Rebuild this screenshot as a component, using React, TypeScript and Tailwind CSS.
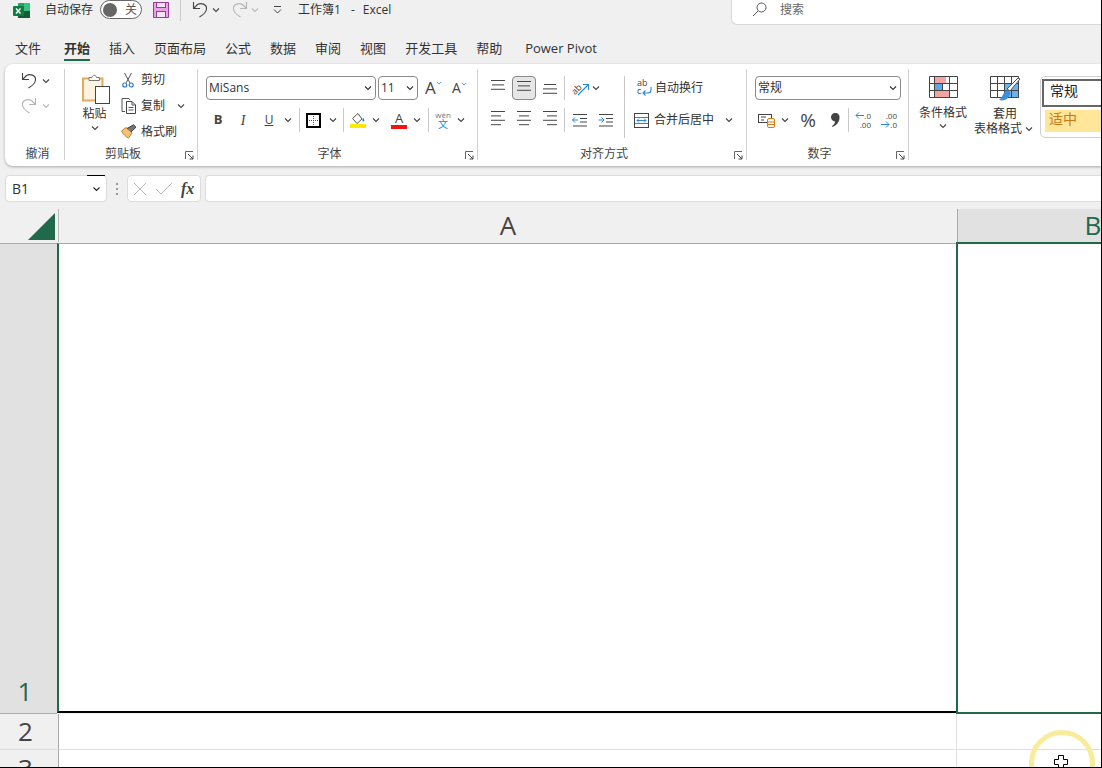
import type { ReactNode } from "react";

// small caret used all over the ribbon
function Caret({ className = "", color = "#444" }: { className?: string; color?: string }) {
  return (
    <svg width="8" height="6" viewBox="0 0 8 6" fill="none" className={className}>
      <path d="M1 1.5 L4 4.5 L7 1.5" stroke={color} strokeWidth="1.1" />
    </svg>
  );
}

function Launcher() {
  return (
    <svg width="9" height="9" viewBox="0 0 9 9" fill="none" className="absolute right-[3px] bottom-0">
      <path d="M0.5 8 V0.5 H8" stroke="#666" />
      <path d="M3 3 L8 8 M8 4.5 V8 H4.5" stroke="#444" />
    </svg>
  );
}

function Group({ label, width, children }: { label: string; width: string; children: ReactNode }) {
  const first = label === "撤消";
  return (
    <div className={"relative flex h-[91px] shrink-0 flex-col border-r border-[#d0d0d0] " + width}>
      <div className="min-h-0 flex-1">{children}</div>
      <div className={"h-[16px] text-center text-[12px] leading-[19px] text-[#444] " + (first ? "pl-[6px]" : "pr-[16px]")}>{label}</div>
      {!first && <Launcher />}
    </div>
  );
}

function Sep({ className = "h-[24px]" }: { className?: string }) {
  return <div className={"w-px shrink-0 bg-[#c8c8c8] " + className} />;
}

function Combo({ text, width }: { text: string; width: string }) {
  return (
    <div className={"flex h-[24px] shrink-0 items-center justify-between rounded-[4px] border border-[#8a8a8a] bg-white pl-[2px] pr-[3px] text-[12px] text-[#333] " + width}>
      <span>{text}</span>
      <Caret color="#333" />
    </div>
  );
}

function Lines({ rows }: { rows: [number, number][] }) {
  return (
    <svg width="16" height={rows.length * 4.4} viewBox={`0 0 16 ${rows.length * 4.4}`} fill="none">
      {rows.map(([x, w], i) => (
        <path key={i} d={`M${x} ${0.5 + i * 4.4} H${x + w}`} stroke="#444" />
      ))}
    </svg>
  );
}

function ExcelLogo() {
  return (
    <svg width="17" height="17" viewBox="0 0 17 17">
      <rect x="5" y="1" width="12" height="15" rx="1" fill="#21a366" />
      <rect x="11" y="1" width="6" height="8" fill="#33c481" />
      <rect x="5" y="9" width="12" height="7" fill="#185c37" />
      <rect x="0" y="4" width="11" height="10" rx="1" fill="#107c41" />
      <path d="M3 6.5 L7.5 11.5 M7.5 6.5 L3 11.5" stroke="#fff" strokeWidth="1.4" />
    </svg>
  );
}

function SaveIcon() {
  return (
    <svg width="16" height="16" viewBox="0 0 16 16" fill="none">
      <path d="M0.5 0.5 H15.5 V15.5 H0.5 Z" fill="#e7a3e6" stroke="#9b3a9b" />
      <rect x="3.5" y="0.5" width="9" height="5" fill="#f7e4f7" stroke="#9b3a9b" />
      <rect x="3.5" y="9.5" width="9" height="6" fill="#f7e4f7" stroke="#9b3a9b" />
    </svg>
  );
}

function Undo({ color = "#444", flip = false }: { color?: string; flip?: boolean }) {
  return (
    <svg width="16" height="17" viewBox="0 0 16 17" fill="none" className={flip ? "-scale-x-100" : ""}>
      <path d="M1.5 1 V7.5 H8" stroke={color} strokeWidth="1.1" />
      <path d="M1.5 7.5 L5.5 3.5 C9 1.5 15 3 14.5 8 C14.2 11 11 14 7.5 16" stroke={color} strokeWidth="1.1" />
    </svg>
  );
}

function PasteIcon() {
  return (
    <svg width="29" height="31" viewBox="0 0 29 31" fill="none" className="ml-[3px] shrink-0">
      <path d="M4 4.5 H20.5 V26.5 H1 V4.5 Z" fill="#fdf3e0" stroke="#e3ab5f" strokeWidth="2" />
      <path d="M7 5.5 V3.5 H10 C10.5 0.5 14 0.5 14.5 3.5 H17.5 V6.5 H7 Z" fill="#fff" stroke="#777" />
      <rect x="13.5" y="12.5" width="14" height="17" fill="#fff" stroke="#444" />
    </svg>
  );
}

function Scissors() {
  return (
    <svg width="12" height="16" viewBox="0 0 12 16" fill="none" className="ml-[1px]">
      <path d="M2.5 1 L8 11 M9.5 1 L4 11" stroke="#555" />
      <circle cx="2.8" cy="13" r="2" stroke="#2b7cd3" strokeWidth="1.2" />
      <circle cx="9.2" cy="13" r="2" stroke="#2b7cd3" strokeWidth="1.2" />
    </svg>
  );
}

function CopyIcon() {
  return (
    <svg width="16" height="16" viewBox="0 0 16 16" fill="none">
      <path d="M4 13.5 H1 V0.5 H8 L9 2" stroke="#555" />
      <path d="M5.5 3.5 H11 L14.5 7 V15.5 H5.5 Z" fill="#fff" stroke="#444" />
      <path d="M11 3.5 V7 H14.5 M7.5 9.5 H12.5 M7.5 12 H12.5" stroke="#555" />
    </svg>
  );
}

function BrushIcon() {
  return (
    <svg width="16" height="15" viewBox="0 0 16 15" fill="none">
      <path d="M0.5 7 L5 3.5 L11 9 L7.5 14 C5 13 2 10 0.5 7 Z" fill="#f3c27a" stroke="#c77f22" />
      <path d="M6 4.5 L12.5 0.8 L15 3.2 L10 8" fill="#777" stroke="#444" />
    </svg>
  );
}

function BorderIcon() {
  return (
    <svg width="15" height="15" viewBox="0 0 15 15" fill="none">
      <rect x="1" y="1" width="13" height="13" fill="#fff" stroke="#000" strokeWidth="2" />
      <path d="M7.5 3 V12 M3 7.5 H12" stroke="#555" strokeDasharray="1 1" />
    </svg>
  );
}

function FillIcon() {
  return (
    <svg width="16" height="16" viewBox="0 0 16 16" fill="none">
      <path d="M2.5 6.5 L8 1.5 L12 7 L7 11.5 Z" fill="#fff" stroke="#555" />
      <path d="M13 5.5 C14.5 7.5 15 9 13.6 9.6 C12.4 9.8 12 8.5 13 5.5 Z" fill="#2b7cd3" />
      <rect x="0" y="12" width="16" height="4" fill="#ffeb00" />
    </svg>
  );
}

function OrientIcon() {
  return (
    <svg width="18" height="17" viewBox="0 0 18 17" fill="none" className="overflow-visible">
      <text x="-1" y="12" fontSize="9" fill="#444" transform="rotate(-45 5 9)">ab</text>
      <path d="M6 15 L16 5 M11 4.5 H16.5 V10" stroke="#2b88d8" strokeWidth="1.1" />
    </svg>
  );
}

function IndentIcon({ right = false }: { right?: boolean }) {
  return (
    <svg width="15" height="14" viewBox="0 0 15 14" fill="none">
      <path d="M1 1.5 H15 M8 5.5 H15 M8 9 H15 M1 13 H15" stroke="#444" />
      {right ? (
        <path d="M0.5 7 H6 M3.5 4.5 L6 7 L3.5 9.5" stroke="#2b88d8" />
      ) : (
        <path d="M6 7 H0.5 M3 4.5 L0.5 7 L3 9.5" stroke="#2b88d8" />
      )}
    </svg>
  );
}

function WrapIcon() {
  return (
    <svg width="16" height="18" viewBox="0 0 16 18" fill="none" className="overflow-visible">
      <text x="0" y="7" fontSize="9" fill="#444">ab</text>
      <text x="0" y="15" fontSize="9" fill="#444">c</text>
      <path d="M14 8 V11 C14 13 12.5 14 11 14 H6 M8.5 11.5 L6 14 L8.5 16.5" stroke="#2b88d8" strokeWidth="1.1" />
    </svg>
  );
}

function MergeIcon() {
  return (
    <svg width="15" height="15" viewBox="0 0 15 15" fill="none">
      <rect x="0.5" y="0.5" width="14" height="14" stroke="#444" />
      <rect x="1" y="4" width="13" height="7" fill="#fff" />
      <path d="M1 4.5 H14 M1 10.5 H14" stroke="#2b88d8" />
      <path d="M3 7.5 H12 M5 5.5 L3 7.5 L5 9.5 M10 5.5 L12 7.5 L10 9.5" stroke="#2b88d8" />
    </svg>
  );
}

function AccountingIcon() {
  return (
    <svg width="19" height="15" viewBox="0 0 19 15" fill="none">
      <rect x="0.5" y="1.5" width="13" height="8" stroke="#444" />
      <path d="M3 4 H8 M3 7 H6" stroke="#444" />
      <rect x="9.5" y="5.5" width="7" height="9" rx="1.5" fill="#fff" stroke="#d97a10" />
      <path d="M9.5 9 H16.5 M9.5 11.5 H16.5" stroke="#d97a10" />
    </svg>
  );
}

function CommaIcon() {
  return (
    <svg width="9" height="14" viewBox="0 0 9 14">
      <path d="M4.5 0 A4 4 0 0 1 8.5 4.5 C8.5 9 5.5 12.5 1.5 14 L1 13 C3 11.5 4 10 4 8.5 A4 4 0 0 1 4.5 0 Z" fill="#444" />
    </svg>
  );
}

function DecimalIcon({ more = false }: { more?: boolean }) {
  return (
    <div className="relative h-[18px] w-[16px] text-[8px] leading-[9px] text-[#444]">
      <span className="absolute right-0 top-0">{more ? ".00" : ".0"}</span>
      <span className="absolute right-0 top-[9px]">{more ? ".0" : ".00"}</span>
      <svg width="9" height="9" viewBox="0 0 9 9" fill="none" className={more ? "absolute left-0 top-[9px]" : "absolute left-0 top-0"}>
        {more ? (
          <path d="M0 4.5 H8 M5 1.5 L8 4.5 L5 7.5" stroke="#2b88d8" />
        ) : (
          <path d="M9 4.5 H1 M4 1.5 L1 4.5 L4 7.5" stroke="#2b88d8" />
        )}
      </svg>
    </div>
  );
}

function CondIcon() {
  return (
    <svg width="29" height="22" viewBox="0 0 29 22" fill="none">
      <rect x="5" y="1" width="12" height="6" fill="#f4a3a3" />
      <rect x="5" y="7" width="8" height="7" fill="#5ea7e6" />
      <rect x="5" y="14" width="15" height="7" fill="#f4a3a3" />
      <path d="M0.5 0.5 H28.5 V21.5 H0.5 Z M5.5 0.5 V21.5 M20.5 0.5 V21.5 M0.5 7.5 H28.5 M0.5 14.5 H28.5" stroke="#444" />
      <path d="M13.5 7.5 V14.5" stroke="#444" />
    </svg>
  );
}

function TableIcon() {
  return (
    <svg width="31" height="27" viewBox="0 0 31 27" fill="none">
      <rect x="15" y="8" width="14" height="14" fill="#6db2ec" />
      <path d="M0.5 0.5 H28.5 V21.5 H0.5 Z M7.5 0.5 V21.5 M14.5 0.5 V21.5 M21.5 0.5 V21.5 M0.5 7.5 H28.5 M0.5 14.5 H28.5" stroke="#444" />
      <path d="M30 3 L20 15 L17 13 L28 2 Z" fill="#fff" stroke="#555" />
      <path d="M17 14 C13 15 14 20 9 24 C15 26 21 21 20 16 Z" fill="#3f8fd6" />
    </svg>
  );
}

function UndoGroup() {
  return (
    <Group label="撤消" width="w-[60px]">
      <div className="flex flex-col gap-[8px] pl-[16px] pt-[3px]">
        <div className="flex items-center gap-[5px]"><Undo /><Caret /></div>
        <div className="flex items-center gap-[5px]"><Undo color="#b5b5b5" flip /><Caret color="#bbb" /></div>
      </div>
    </Group>
  );
}

function ClipboardGroup() {
  return (
    <Group label="剪贴板" width="w-[133px]">
      <div className="flex pl-[15px] pt-[5px]">
        <div className="flex w-[29px] flex-col items-center">
          <PasteIcon />
          <div className="whitespace-nowrap text-[12px] leading-[17px] text-[#333]">粘贴</div>
          <Caret className="mt-[3px]" />
        </div>
        <div className="-mt-[3px] ml-[12px] flex flex-col gap-[9px] text-[12px] leading-[17px] text-[#333]">
          <div className="flex items-center"><span className="flex w-[20px]"><Scissors /></span><span>剪切</span></div>
          <div className="flex items-center"><span className="flex w-[20px]"><CopyIcon /></span><span>复制</span><Caret className="ml-[12px]" /></div>
          <div className="flex items-center"><span className="flex w-[20px]"><BrushIcon /></span><span>格式刷</span></div>
        </div>
      </div>
    </Group>
  );
}

function FontGroup() {
  return (
    <Group label="字体" width="w-[280px]">
      <div className="flex flex-col gap-[8px] pl-[8px] pt-[7px]">
        <div className="flex items-center gap-[2px]">
          <Combo text="MiSans" width="w-[170px]" />
          <Combo text="11" width="w-[40px]" />
          <span className="ml-[5px] -mt-[1px] flex w-[26px] items-center text-[17px] leading-none text-[#444]">A<Caret className="-mt-[9px] w-[6px]" color="#2b88d8" /></span>
          <span className="flex w-[26px] items-center text-[14px] leading-none text-[#444]">A<Caret className="-mt-[9px] w-[6px]" color="#2b88d8" /></span>
        </div>
        <div className="flex h-[24px] items-center text-[#444]">
          <span className="w-[24px] text-center text-[13px] font-bold">B</span>
          <span className="w-[26px] text-center font-['Liberation_Serif',serif] text-[14px] italic">I</span>
          <span className="w-[26px] text-center text-[12px] underline">U</span>
          <Caret className="ml-[2px] mr-[7px]" />
          <Sep />
          <span className="ml-[6px] mr-[8px] flex"><BorderIcon /></span>
          <Caret className="mr-[6px]" />
          <Sep />
          <span className="ml-[6px] mr-[6px] flex"><FillIcon /></span>
          <Caret className="mr-[11px]" />
          <span className="flex w-[16px] flex-col items-center text-[13px] leading-[13px]">A<span className="h-[4px] w-[16px] bg-[#f01414]" /></span>
          <Caret className="ml-[6px] mr-[7px]" />
          <Sep />
          <span className="ml-[6px] flex w-[16px] flex-col items-center leading-none">
            <span className="text-[8px] text-[#777]">wén</span>
            <span className="text-[10px] text-[#2b88d8]">文</span>
          </span>
          <Caret className="ml-[6px]" />
        </div>
      </div>
    </Group>
  );
}

function AlignGroup() {
  return (
    <Group label="对齐方式" width="w-[269px]">
      <div className="flex pl-[12px] pt-[7px]">
        <div className="flex flex-col gap-[8px]">
          <div className="flex h-[24px] items-center">
            <span className="flex w-[16px] self-start pt-[4px]"><Lines rows={[[1, 14], [2, 12], [1, 14]]} /></span>
            <span className="ml-[6px] flex h-[24px] w-[24px] items-center justify-center rounded-[4px] border border-[#8a8a8a] bg-[#e6e6e6]"><Lines rows={[[1, 14], [2, 12], [1, 14]]} /></span>
            <span className="ml-[6px] flex w-[16px] self-end pb-[3px]"><Lines rows={[[2, 12], [1, 14], [1, 14]]} /></span>
            <span className="ml-[6px]"><Sep /></span>
            <span className="ml-[7px] flex"><OrientIcon /></span>
            <Caret className="ml-[2px]" />
          </div>
          <div className="flex h-[24px] items-center">
            <span className="flex w-[16px]"><Lines rows={[[1, 14], [1, 10], [1, 14], [1, 10]]} /></span>
            <span className="ml-[10px] flex w-[16px]"><Lines rows={[[1, 14], [3, 10], [1, 14], [3, 10]]} /></span>
            <span className="ml-[10px] flex w-[16px]"><Lines rows={[[1, 14], [5, 10], [1, 14], [5, 10]]} /></span>
            <span className="ml-[6px]"><Sep /></span>
            <span className="ml-[7px] flex"><IndentIcon /></span>
            <span className="ml-[11px] flex"><IndentIcon right /></span>
          </div>
        </div>
        <span className="ml-[11px]"><Sep className="h-[62px]" /></span>
        <div className="ml-[9px] flex flex-col gap-[8px] text-[12px] text-[#333]">
          <div className="flex h-[24px] items-center"><span className="ml-[3px] flex w-[18px]"><WrapIcon /></span><span>自动换行</span></div>
          <div className="flex h-[24px] items-center"><span className="flex w-[20px]"><MergeIcon /></span><span>合并后居中</span><Caret className="ml-[11px]" /></div>
        </div>
      </div>
    </Group>
  );
}

function NumberGroup() {
  return (
    <Group label="数字" width="w-[162px]">
      <div className="flex flex-col gap-[8px] pl-[8px] pt-[7px]">
        <Combo text="常规" width="w-[146px]" />
        <div className="flex h-[24px] items-center text-[#444]">
          <span className="ml-[3px] flex"><AccountingIcon /></span>
          <Caret className="ml-[4px]" />
          <span className="ml-[7px] w-[24px] text-center text-[19px] leading-none">%</span>
          <span className="ml-[4px] flex w-[22px] justify-center"><CommaIcon /></span>
          <span className="ml-[2px]"><Sep /></span>
          <span className="ml-[6px] flex"><DecimalIcon /></span>
          <span className="ml-[10px] flex"><DecimalIcon more /></span>
        </div>
      </div>
    </Group>
  );
}

function StylesGroup() {
  return (
    <div className="flex h-[91px] shrink-0 pl-[10px] pt-[7px] text-[12px] leading-[15px] text-[#333]">
      <div className="flex w-[48px] flex-col items-center">
        <CondIcon />
        <div className="mt-[7px] whitespace-nowrap">条件格式</div>
        <Caret className="mt-[3px]" />
      </div>
      <div className="ml-[7px] flex w-[62px] flex-col items-center">
        <span className="flex h-[30px]"><TableIcon /></span>
        <div className="whitespace-nowrap">套用</div>
        <div className="flex items-center self-start whitespace-nowrap">表格格式<Caret className="ml-[3px] shrink-0" /></div>
      </div>
      <div className="ml-[4px] h-[62px] w-[80px] rounded-l-[5px] border border-[#d0d0d0] pl-[1px] pt-[2px] text-[14px]">
        <div className="h-[28px] border-2 border-[#666] border-r-0 bg-white pl-[6px] leading-[20px] text-[#222]">常规</div>
        <div className="ml-[3px] mt-[3px] h-[22px] bg-[#ffe699] pl-[4px] leading-[18px] text-[#c67a14]">适中</div>
      </div>
    </div>
  );
}

function FormulaBar() {
  return (
    <div className="mt-[9px] flex h-[27px] items-center pl-[5px] text-[#333]">
      <div className="relative flex h-[27px] w-[102px] items-center justify-between rounded-[4px] border border-[#dcdcdc] bg-white pl-[6px] pr-[5px] text-[14px]">
        <span>B1</span>
        <Caret color="#222" className="w-[9px]" />
        <span className="absolute right-[1px] -top-px h-px w-[18px] bg-black" />
      </div>
      <svg width="2" height="12" viewBox="0 0 2 12" className="ml-[9px]">
        <path d="M0 0 H2 V2 H0 Z M0 5 H2 V7 H0 Z M0 10 H2 V12 H0 Z" fill="#999" />
      </svg>
      <div className="ml-[9px] flex h-[27px] w-[74px] items-center rounded-[4px] border border-[#dcdcdc] bg-white pl-[5px]">
        <svg width="14" height="14" viewBox="0 0 14 14" fill="none"><path d="M1 1 L13 13 M13 1 L1 13" stroke="#b8b8b8" /></svg>
        <svg width="18" height="14" viewBox="0 0 18 14" fill="none" className="ml-[8px]"><path d="M1 7 L6 12 L17 1" stroke="#b8b8b8" /></svg>
        <span className="ml-[8px] font-['Liberation_Serif',serif] text-[16px] font-bold italic text-[#444]">fx</span>
      </div>
      <div className="ml-[4px] h-[27px] flex-1 rounded-l-[4px] border border-r-0 border-[#dcdcdc] bg-white" />
    </div>
  );
}

function Grid() {
  return (
    <div className="mt-[7px] flex min-h-0 flex-1 flex-col overflow-hidden">
      <div className="flex h-[33px] shrink-0">
        <div className="flex w-[58px] shrink-0 items-start justify-end pr-[3px] pt-[4px]">
          <svg width="27" height="27" viewBox="0 0 27 27"><path d="M27 0 V27 H0 Z" fill="#21694b" /></svg>
        </div>
        <div className="flex w-[899px] shrink-0 items-center justify-center border-l border-[#bbb] text-[26px] leading-[33px] text-[#444]">A</div>
        <div className="flex flex-1 items-center justify-center overflow-hidden border-l border-[#aaa] bg-[#e1e1e1] pl-[127px] text-[26px] leading-[33px] text-[#21694b]">B</div>
      </div>
      <div className="flex h-[472px] shrink-0">
        <div className="mt-[1px] flex w-[57px] shrink-0 items-end justify-center border-b border-t border-[#aaa] bg-[#e1e1e1] pb-[4px] pr-[7px] text-[26px] leading-[36px] text-[#21694b]">1</div>
        <div className="mb-[1px] mt-[1px] w-[899px] shrink-0 border-b-2 border-l-2 border-t border-b-black border-l-[#21694b] border-t-[#aaa] bg-white" />
        <div className="flex-1 border-2 border-r-0 border-[#21694b] bg-white" />
      </div>
      <div className="flex h-[36px] shrink-0">
        <div className="flex w-[59px] shrink-0 items-center justify-center border-b border-r border-[#aaa] border-b-[#ddd] pr-[7px] text-[26px] text-[#444]">2</div>
        <div className="w-[898px] shrink-0 border-b border-r border-[#e0e0e0] bg-white" />
        <div className="flex-1 border-b border-[#e0e0e0] bg-white" />
      </div>
      <div className="flex flex-1">
        <div className="w-[59px] shrink-0 overflow-hidden border-r border-[#aaa] pr-[7px] text-center text-[26px] leading-[36px] text-[#444]">3</div>
        <div className="w-[898px] shrink-0 border-r border-[#e0e0e0] bg-white" />
        <div className="flex-1 bg-white" />
      </div>
    </div>
  );
}

export default function App() {
  const tabs = ["插入", "页面布局", "公式", "数据", "审阅", "视图", "开发工具", "帮助"];
  return (
    <div className="relative flex h-[768px] w-[1102px] flex-col overflow-hidden border-b border-r border-black bg-[#f0f0f0] font-['Open_Sans','Noto_Sans_CJK_SC',sans-serif]">
      {/* title bar */}
      <div className="flex h-[26px] shrink-0 items-start text-[12px] text-[#333]">
        <span className="ml-[13px] mt-[2px] flex"><ExcelLogo /></span>
        <span className="ml-[15px] mt-[1px] leading-[17px]">自动保存</span>
        <div className="ml-[7px] flex h-[19px] w-[42px] items-center rounded-full border border-[#666] bg-white pl-[2px]">
          <span className="h-[14px] w-[14px] rounded-full bg-[#666]" />
          <span className="ml-[8px] text-[12px] text-[#555]">关</span>
        </div>
        <span className="ml-[11px] mt-[2px] flex"><SaveIcon /></span>
        <span className="ml-[11px]"><Sep className="h-[21px]" /></span>
        <span className="ml-[11px] mt-[1px] flex"><Undo /></span>
        <Caret className="ml-[4px] mt-[7px]" />
        <span className="ml-[12px] mt-[1px] flex"><Undo color="#b5b5b5" flip /></span>
        <Caret className="ml-[3px] mt-[7px]" color="#bbb" />
        <svg width="9" height="8" viewBox="0 0 9 8" fill="none" className="ml-[14px] mt-[6px]"><path d="M1 0.5 H8 M1 3.5 L4.5 7 L8 3.5" stroke="#444" /></svg>
        <span className="ml-[16px] mt-[1px] whitespace-nowrap leading-[17px]">工作簿1</span>
        <span className="ml-[10px] mt-[1px] leading-[17px]">-</span>
        <span className="ml-[8px] mt-[1px] leading-[17px]">Excel</span>
        <div className="ml-auto flex h-[25px] w-[370px] items-center rounded-bl-[6px] border-b border-l border-[#d8d8d8] bg-white pb-[5px] pl-[20px] text-[#666]">
          <svg width="15" height="15" viewBox="0 0 15 15" fill="none"><circle cx="9.5" cy="5.5" r="4.5" stroke="#555" /><path d="M6 9 L1 14" stroke="#555" /></svg>
          <span className="ml-[13px]">搜索</span>
        </div>
      </div>
      {/* tabs */}
      <div className="flex h-[38px] shrink-0 items-center whitespace-nowrap pl-[15px] pt-[8px] text-[13px] text-[#333]">
        <span>文件</span>
        <span className="relative ml-[23px] mr-[19px] font-bold">
          开始
          <span className="absolute -bottom-[2px] left-0 h-[2px] w-full bg-[#21694b]" />
        </span>
        <div className="flex gap-[19px]">
          {tabs.map((t) => <span key={t}>{t}</span>)}
        </div>
        <span className="ml-[23px]">Power Pivot</span>
      </div>
      {/* ribbon */}
      <div className="ml-[5px] flex h-[102px] shrink-0 rounded-l-[8px] bg-white py-[5px] shadow-[0_1px_3px_rgba(0,0,0,0.3)]">
        <UndoGroup />
        <ClipboardGroup />
        <FontGroup />
        <AlignGroup />
        <NumberGroup />
        <StylesGroup />
      </div>
      <FormulaBar />
      <Grid />
      {/* click highlight and cursor */}
      <div className="absolute left-[1029px] top-[730px] h-[66px] w-[66px] rounded-full border-[5px] border-[#f8ec9a]" />
      <svg width="16" height="14" viewBox="0 0 16 14" className="absolute left-[1053px] top-[755px]">
        <path d="M5.5 0.5 H10.5 V4.5 H14.5 V9.5 H10.5 V14 H5.5 V9.5 H1.5 V4.5 H5.5 Z" fill="#fff" stroke="#000" />
      </svg>
    </div>
  );
}
